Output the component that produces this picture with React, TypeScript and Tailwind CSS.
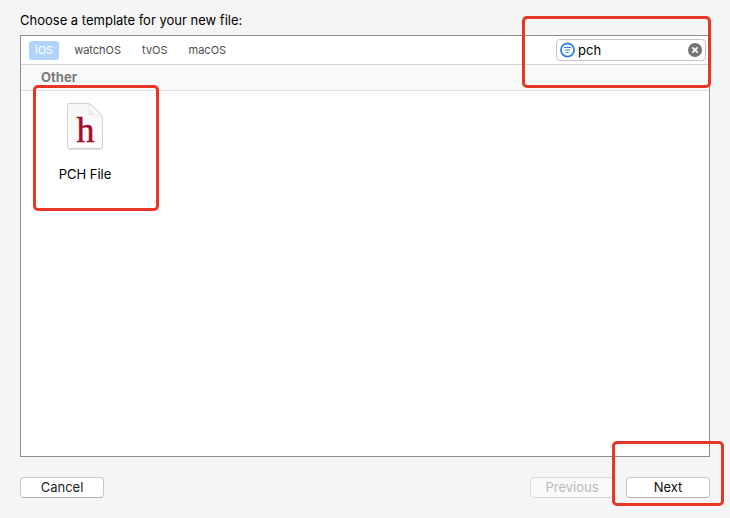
import React, { useState } from 'react';

const platforms = ['iOS', 'watchOS', 'tvOS', 'macOS'];

const FilterIcon = () => (
  <svg viewBox="0 0 16 16" className="h-4 w-4 shrink-0" fill="none" aria-hidden="true">
    <circle cx="7.500" cy="8" r="6.6" stroke="#2f80dc" strokeWidth="1.700" />
    <path d="M3.900 5.500h7.200M4.900 8h5.200M6.300 10.500h2.400" stroke="#2f80dc" strokeWidth="1.200" />
  </svg>
);

const ClearIcon = () => (
  <svg viewBox="0 0 14 14" className="h-3.5 w-3.5" fill="none" aria-hidden="true">
    <circle cx="7" cy="7" r="7" fill="#757575" />
    <path d="M4.3 4.3l5.4 5.4M9.7 4.3L4.3 9.7" stroke="#fff" strokeWidth="1.7" />
  </svg>
);

const HeaderFileIcon = () => (
  <svg viewBox="0 0 40 50" className="h-[50px] w-10" aria-hidden="true">
    <defs>
      <linearGradient id="sheet" x1="0" y1="0" x2="0" y2="1">
        <stop offset="0" stopColor="#f6f6f6" />
        <stop offset="1" stopColor="#ffffff" />
      </linearGradient>
      <linearGradient id="fold" x1="0" y1="1" x2="1" y2="0">
        <stop offset="0.200" stopColor="#e2e2e2" />
        <stop offset="0.450" stopColor="#fdfdfd" />
        <stop offset="0.700" stopColor="#e6e6e6" />
      </linearGradient>
    </defs>
    <path d="M3.500 48.300h33" stroke="#000" strokeOpacity="0.12" strokeWidth="1.400" />
    <path d="M3.500 2.500H22.500c4 0 15 10.500 15 14.500V46c0 .8-.7 1.500-1.500 1.500H4c-.8 0-1.500-.7-1.500-1.500V3.500c0-.6.4-1 1-1z" fill="url(#sheet)" stroke="#cdcdcd" strokeWidth="0.900" />
    <path d="M22.500 2.700c2.500 1.800 2.700 6.300 1.800 11.300 4.700-1 10.200-.2 13 3C36.500 12.500 27 3.200 22.500 2.700z" fill="url(#fold)" stroke="#d6d6d6" strokeWidth="0.500" />
    <text x="20.500" y="40.500" textAnchor="middle" fontSize="36" fill="#a80b2e" stroke="#a80b2e" strokeWidth="0.500" className="font-['Liberation_Serif',serif]">h</text>
  </svg>
);

const Highlight = ({ className }: { className: string }) => (
  <span aria-hidden="true" className={`pointer-events-none absolute z-10 rounded-[5px] border-3 border-[#e93526] ${className}`} />
);

export default function App() {
  const [platform, setPlatform] = useState('iOS');
  const [query, setQuery] = useState('pch');

  return (
    <main className="flex min-h-screen flex-col overflow-hidden bg-[#f5f5f5] px-5 pt-2.5 pb-5 font-[Inter,sans-serif] text-[13px] leading-5 text-black">
      <h1 className="mb-[5px]">Choose a template for your new file:</h1>

      <section className="flex flex-1 flex-col border border-[#8e8e8e] bg-white">
        <div className="flex h-[29px] items-center justify-between border-b border-[#d4d4d4] pr-[3px] pl-2">
          <nav className="flex items-center gap-[9px] text-[11px] leading-[19px] text-[#4b4b4b]">
            {platforms.map((name) => (
              <button
                key={name}
                type="button"
                aria-pressed={platform === name}
                onClick={() => setPlatform(name)}
                className={platform === name ? 'rounded-[3px] bg-[#b2d3fc] px-1.5 text-white' : 'px-1.5'}
              >
                {name}
              </button>
            ))}
          </nav>

          <div className="relative">
            <label className="flex h-[22px] w-[150px] items-center gap-0.5 rounded-[4px] border border-[#c6c6c6] bg-white px-[3px]">
              <FilterIcon />
              <input
                type="text"
                aria-label="Filter"
                value={query}
                onChange={(e) => setQuery(e.target.value)}
                className="min-w-0 flex-1 bg-transparent outline-none"
              />
              <button type="button" aria-label="Clear" onClick={() => setQuery('')}>
                <ClearIcon />
              </button>
            </label>
            <Highlight className="-top-[23px] -right-[5px] -bottom-[27px] -left-[34px]" />
          </div>
        </div>

        <h2 className="h-[26px] border-b border-[#dedede] bg-[#f9f9f9] pl-5 leading-[25px] font-bold text-[#7b7b7b]">Other</h2>

        <div className="flex px-3">
          <button type="button" className="relative flex w-[104px] flex-col items-center pt-2.5">
            <HeaderFileIcon />
            <span className="mt-[13px]">PCH File</span>
            <Highlight className="-top-1.5 -right-[22px] -bottom-[27px] left-0" />
          </button>
        </div>
      </section>

      <footer className="mt-5 flex items-center justify-between leading-[19px]">
        <button type="button" className="w-[84px] rounded-[4px] border border-[#c8c8c8] border-b-[#b0b0b0] bg-white text-[#222]">
          Cancel
        </button>
        <div className="flex gap-3">
          <button type="button" disabled className="w-[84px] rounded-[4px] border border-[#dadada] bg-[#f9f9f9] text-[#b9b9b9]">
            Previous
          </button>
          <div className="relative">
            <button type="button" className="w-[84px] rounded-[4px] border border-[#c8c8c8] border-b-[#b0b0b0] bg-white text-[#111]">
              Next
            </button>
            <Highlight className="-top-9 -right-3.5 -bottom-2 -left-3.5" />
          </div>
        </div>
      </footer>
    </main>
  );
}
